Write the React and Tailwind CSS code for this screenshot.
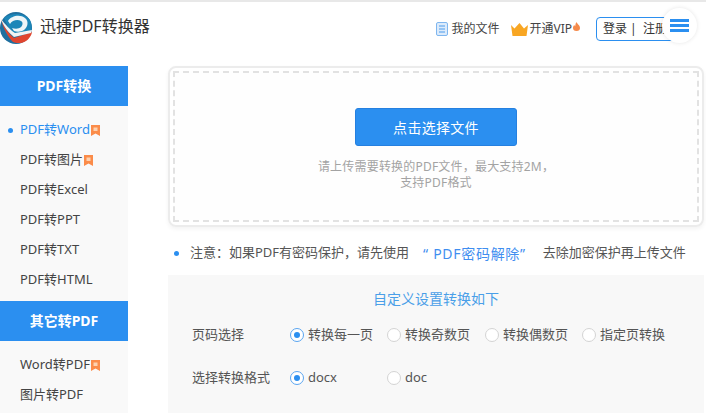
import { useState } from 'react';

const FONT = "font-['Noto_Sans','Noto_Sans_CJK_SC',sans-serif]";

function Logo() {
  return (
    <svg width="32" height="32" viewBox="0 0 32 32" className="shrink-0">
      <circle cx="16" cy="16" r="16" fill="#1f6f9f" />
      <path d="M4 6C10 1 24 0 30 8c2 5 2 9 1 12L14 24C10 20 7 12 4 6z" fill="#1c86b8" />
      <path d="M8 9c3-5 12-7 17-3 4 3 3 9-1 12-3 2-7 2-10 1l-2-3c3 1 7 1 9-1 2-2 2-5 0-6-3-2-9-1-11 3z" fill="#eef5f8" />
      <path d="M1 7c3 8 8 15 13 19l18-6c-1 6-6 10-11 11-3 0-6 0-8-1C8 25 3 16 1 7z" fill="#e0452f" />
      <path d="M1 7c4 5 9 11 14 14l17-3-1 3-17 4C9 21 3 14 1 7z" fill="#f2f2f2" />
    </svg>
  );
}

function Badge() {
  return (
    <svg width="9" height="11" viewBox="0 0 9 11" className="ml-[1px] shrink-0">
      <path d="M0 0h9v11L4.500 8.500 0 11z" fill="#fb8c4a" />
      <rect x="2.500" y="2.500" width="4" height="3.500" fill="#fdd2b0" />
    </svg>
  );
}

function MenuItem({ label, active, badge }) {
  return (
    <a className={`relative flex h-[30px] items-center pl-[20px] text-[13px] ${active ? 'text-[#2b8ff0]' : 'text-[#444]'}`}>
      {active && <span className="absolute left-[8px] h-[5px] w-[5px] rounded-full bg-[#2b8ff0]" />}
      {label}
      {badge && <Badge />}
    </a>
  );
}

function Radio({ label, checked, onClick, className }) {
  return (
    <button onClick={onClick} className={`flex items-center gap-[4px] text-[13px] text-[#555] ${className}`}>
      {checked ? (
        <span className="flex h-[14px] w-[14px] items-center justify-center rounded-full border border-[#5aa5f0] bg-white">
          <span className="h-[6px] w-[6px] rounded-full bg-[#2b8ff0]" />
        </span>
      ) : (
        <span className="h-[14px] w-[14px] rounded-full border border-[#d4d4d4] bg-white" />
      )}
      {label}
    </button>
  );
}

export default function App() {
  const [page, setPage] = useState('all');
  const [format, setFormat] = useState('docx');

  return (
    <div className={`relative h-[413px] w-[706px] overflow-hidden border-t-2 border-[#e8e8e8] bg-white ${FONT}`}>
      <header className="flex h-[64px] items-center">
        <div className="flex items-center gap-[8px] pb-[13px]">
          <Logo />
          <span className="-mt-[3px] text-[16px] text-[#333]">迅捷PDF转换器</span>
        </div>
        <div className="ml-auto mr-[20px] flex items-center pb-[10px] text-[12px] text-[#444]">
          <span className="flex items-center gap-[3px]">
            <svg width="12" height="14" viewBox="0 0 12 14">
              <rect x="0.500" y="0.500" width="11" height="13" rx="1.500" fill="#dcebfb" stroke="#7fb6ef" />
              <path d="M3 4h6M3 7h6M3 10h6" stroke="#4d9cec" />
            </svg>
            我的文件
          </span>
          <span className="ml-[12px] flex items-center gap-[1px]">
            <svg width="17" height="13" viewBox="0 0 17 13">
              <path d="M0 2l3.500 3.500L8.500 0l4.500 5.500L17 2l-1.500 11h-14z" fill="#f8a623" />
            </svg>
            开通VIP
            <svg width="7" height="9" viewBox="0 0 7 9" className="mb-[6px]">
              <path d="M3.500 0C4 2 7 3 7 6a3.500 3 0 0 1-7 0c0-1.500.7-2.300 1.300-3 .2.700.5 1 .9 1.200C2.400 2.600 2.800 1 3.500 0z" fill="#f58a4b" />
            </svg>
          </span>
          <div className="ml-[16px] flex h-[24px] w-[90px] items-center rounded-[4px] border border-[#2b8ff0] pl-[6px] text-[#333]">
            <span className="whitespace-nowrap">登录&nbsp;|&nbsp;&nbsp;注册</span>
          </div>
        </div>
      </header>

      <button className="absolute left-[662px] top-[6px] flex h-[35px] w-[35px] flex-col items-center justify-center gap-[2px] rounded-full bg-white shadow-[0_0_4px_rgba(0,0,0,0.1)]">
        <span className="h-[3px] w-[19px] bg-[#2b8ff0]" />
        <span className="h-[3px] w-[19px] bg-[#2b8ff0]" />
        <span className="h-[3px] w-[19px] bg-[#2b8ff0]" />
      </button>

      <div className="flex">
        <aside className="h-[347px] w-[128px] shrink-0 bg-[#f9f9f9]">
          <div className="flex h-[40px] items-center justify-center bg-[#2b8ff0] pb-[1px] text-[14px] font-bold text-white">PDF转换</div>
          <nav className="flex h-[195px] flex-col pt-[9px]">
            <MenuItem label="PDF转Word" active badge />
            <MenuItem label="PDF转图片" badge />
            <MenuItem label="PDF转Excel" />
            <MenuItem label="PDF转PPT" />
            <MenuItem label="PDF转TXT" />
            <MenuItem label="PDF转HTML" />
          </nav>
          <div className="flex h-[40px] items-center justify-center bg-[#2b8ff0] pb-[2px] text-[14px] font-bold text-white">其它转PDF</div>
          <nav className="flex flex-col pt-[9px]">
            <MenuItem label="Word转PDF" badge />
            <MenuItem label="图片转PDF" />
          </nav>
        </aside>

        <main className="ml-[40px] w-[536px] shrink-0">
          <section className="h-[161px] rounded-[8px] border-2 border-[#ececec] p-[3px] shadow-[0_2px_4px_rgba(0,0,0,0.05)]">
            <div className="flex h-full flex-col items-center border-2 border-dashed border-[#e2e2e2] bg-[#fefefe] pt-[35px]">
              <button className="h-[38px] w-[162px] rounded-[3px] border border-[#2580e0] bg-[#2b8ff0] text-[14px] tracking-[0.3px] text-white">点击选择文件</button>
              <p className="mt-[13px] text-center text-[12px] leading-[16px] tracking-[0.2px] text-[#a3a3a3]">
                请上传需要转换的PDF文件，最大支持2M，<br />支持PDF格式
              </p>
            </div>
          </section>

          <p className="flex h-[48px] items-center whitespace-nowrap pt-[4px] text-[13px] text-[#555]">
            <span className="ml-[6px] mr-[11px] h-[5px] w-[5px] rounded-full bg-[#2b8ff0]" />
            注意：如果PDF有密码保护，请先使用
            <span className="ml-[14px] text-[14px] tracking-[0.7px] text-[#3f8ef0]">“ PDF密码解除”</span>
            <span className="ml-[17px]">去除加密保护再上传文件</span>
          </p>

          <section className="h-[138px] bg-[#f8f8f8] pl-[24px] pt-[13px]">
            <h2 className="pr-[24px] text-center text-[14px] font-normal text-[#4a9fe8]">自定义设置转换如下</h2>
            <div className="mt-[16px] flex h-[20px] items-center text-[13px] text-[#555]">
              <span className="w-[98px]">页码选择</span>
              <Radio label="转换每一页" checked={page === 'all'} onClick={() => setPage('all')} className="w-[97px]" />
              <Radio label="转换奇数页" checked={page === 'odd'} onClick={() => setPage('odd')} className="w-[98px]" />
              <Radio label="转换偶数页" checked={page === 'even'} onClick={() => setPage('even')} className="w-[97px]" />
              <Radio label="指定页转换" checked={page === 'custom'} onClick={() => setPage('custom')} />
            </div>
            <div className="mt-[23px] flex h-[20px] items-center text-[13px] text-[#555]">
              <span className="w-[98px]">选择转换格式</span>
              <Radio label="docx" checked={format === 'docx'} onClick={() => setFormat('docx')} className="w-[97px]" />
              <Radio label="doc" checked={format === 'doc'} onClick={() => setFormat('doc')} />
            </div>
          </section>
        </main>
      </div>
    </div>
  );
}
